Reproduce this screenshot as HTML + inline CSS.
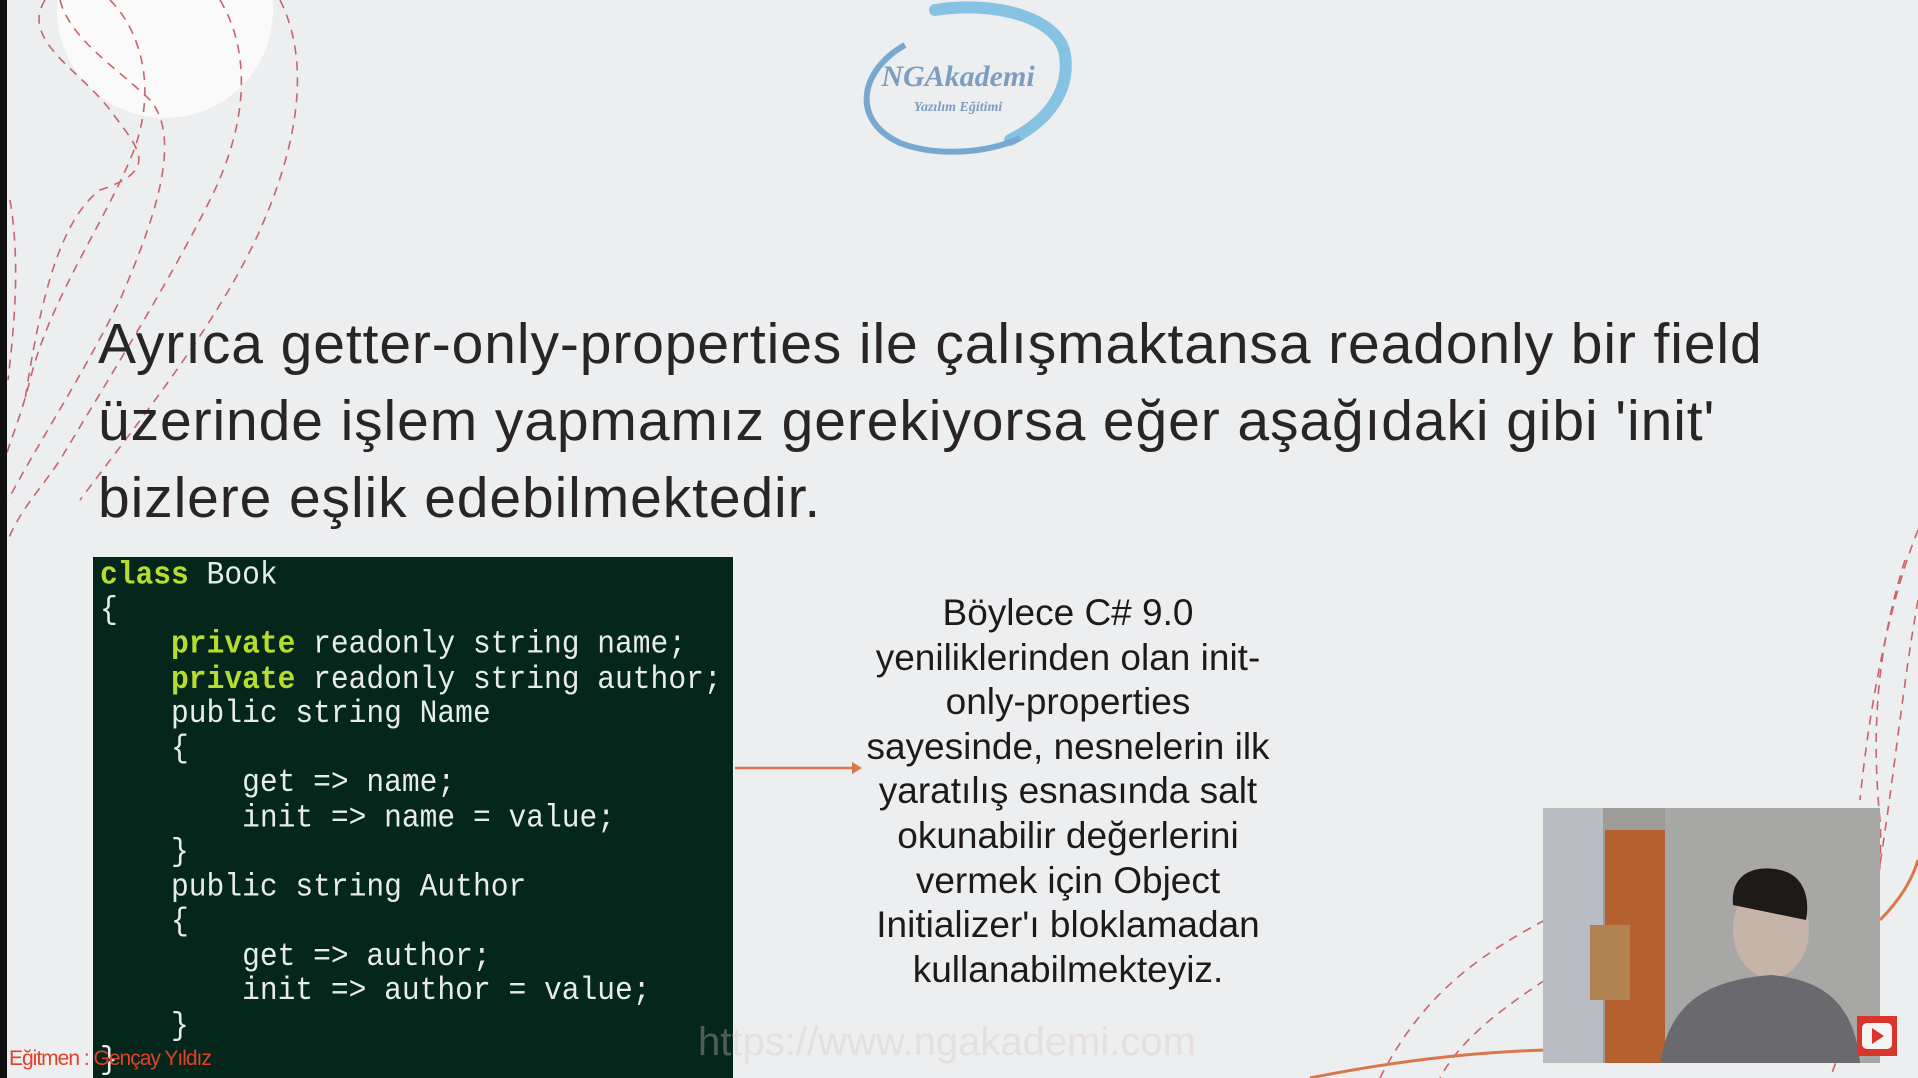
<!DOCTYPE html>
<html><head><meta charset="utf-8"><style>
html,body{margin:0;padding:0}
body{width:1918px;height:1078px;position:relative;overflow:hidden;background:#eceeef;font-family:"Liberation Sans",sans-serif}
.abs{position:absolute}
.title{left:98px;top:306px;font-size:57px;line-height:77px;color:#2a2525;letter-spacing:0.9px;white-space:nowrap}
.code{left:93px;top:557px;width:640px;height:521px;background:#04261b}
.code pre{margin:0;position:absolute;left:7px;top:1px;font-family:"Liberation Mono",monospace;font-size:29.6px;line-height:31.5px;letter-spacing:0px;color:#e8ece8;transform:scaleY(1.1);transform-origin:0 0}
.k{color:#b6dc2e;font-weight:bold}
.side{left:818px;top:591px;width:500px;text-align:center;font-size:37px;line-height:44.6px;color:#1e1a1a}
</style></head><body>
<svg class="abs" style="left:0;top:0" width="1918" height="1078">
<circle cx="165" cy="10" r="108" fill="#fafafa"/>
<g fill="none" stroke="#c9656a" stroke-width="1.6" stroke-dasharray="9 7">
<path d="M45 0 C20 40 80 70 110 110 C140 150 160 170 100 190 C60 220 40 300 25 400"/>
<path d="M60 0 C70 40 120 70 150 100 C185 140 150 230 120 300 C80 380 40 440 8 500"/>
<path d="M110 0 C140 30 160 90 130 160 C100 230 50 300 30 380 C20 420 10 440 5 460"/>
<path d="M220 0 C250 50 250 120 210 200 C170 280 120 360 60 460 C40 490 20 510 8 540"/>
<path d="M280 0 C310 60 300 140 260 230 C220 320 140 420 80 500"/>
<path d="M10 200 C20 260 15 320 8 380"/>
<path d="M1918 530 C1890 600 1870 700 1860 800"/>
<path d="M1905 560 C1880 640 1870 720 1880 820 C1885 900 1860 1000 1830 1078"/>
<path d="M1918 600 C1900 700 1890 820 1870 920"/>
<path d="M1545 920 C1470 960 1420 1000 1380 1078"/>
<path d="M1545 980 C1500 1010 1460 1040 1440 1078"/>
</g>
<path d="M1880 920 C1900 900 1912 880 1918 860" fill="none" stroke="#d9774a" stroke-width="3"/>
<path d="M1310 1078 C1400 1060 1480 1052 1545 1050" fill="none" stroke="#d9774a" stroke-width="3"/>
<rect x="0" y="0" width="7" height="1078" fill="#111"/>
<path d="M735 768 L858 768" stroke="#d9774a" stroke-width="2.5"/>
<path d="M852 762 L862 768 L852 774 Z" fill="#d9774a"/>
<path d="M935 10 C1000 0 1060 20 1065 55 C1070 90 1050 120 1010 140" fill="none" stroke="#86c3e3" stroke-width="12" stroke-linecap="round"/>
<path d="M905 45 C860 70 850 120 900 143 C940 158 990 152 1020 138" fill="none" stroke="#78a8cf" stroke-width="6"/>
<text x="958" y="86" text-anchor="middle" font-family="Liberation Serif,serif" font-style="italic" font-weight="bold" font-size="30" fill="#7d9ec0">NGAkademi</text>
<text x="958" y="111" text-anchor="middle" font-family="Liberation Serif,serif" font-style="italic" font-weight="bold" font-size="14" fill="#7d9ec0">Yazılım Eğitimi</text>
<rect x="1543" y="808" width="337" height="255" fill="#9d9c98"/>
<rect x="1543" y="808" width="60" height="255" fill="#b9bcc2"/>
<rect x="1605" y="830" width="60" height="233" fill="#b4612f"/>
<rect x="1590" y="925" width="40" height="75" fill="#b08252"/>
<rect x="1665" y="808" width="215" height="255" fill="#a7a8a6"/>
<ellipse cx="1771" cy="930" rx="38" ry="48" fill="#c6b4a8"/>
<path d="M1733 905 C1730 870 1760 865 1780 870 C1805 875 1810 900 1806 920" fill="#1e1a18"/>
<path d="M1660 1063 C1670 1000 1710 980 1771 975 C1830 980 1855 1010 1860 1063 Z" fill="#6a6a6e"/>
<rect x="1857" y="1016" width="40" height="40" fill="#d8362c"/>
<rect x="1862" y="1023" width="30" height="26" rx="5" fill="#f4f4f4"/>
<path d="M1872 1028 L1884 1036 L1872 1044 Z" fill="#d8362c"/>
</svg>
<div class="abs title">Ayrıca getter-only-properties ile çalışmaktansa readonly bir field<br>üzerinde işlem yapmamız gerekiyorsa eğer aşağıdaki gibi 'init'<br>bizlere eşlik edebilmektedir.</div>
<div class="abs code"><pre><span class="k">class</span> Book
{
    <span class="k">private</span> readonly string name;
    <span class="k">private</span> readonly string author;
    public string Name
    {
        get =&gt; name;
        init =&gt; name = value;
    }
    public string Author
    {
        get =&gt; author;
        init =&gt; author = value;
    }
}</pre></div>
<div class="abs side">Böylece C# 9.0<br>yeniliklerinden olan init-<br>only-properties<br>sayesinde, nesnelerin ilk<br>yaratılış esnasında salt<br>okunabilir değerlerini<br>vermek için Object<br>Initializer'ı bloklamadan<br>kullanabilmekteyiz.</div>
<div class="abs" style="left:698px;top:1020px;font-size:40px;color:#d9c6bd;opacity:0.35">https://www.ngakademi.com</div>
<div class="abs" style="left:9px;top:1047px;font-size:21px;color:#e0422a;letter-spacing:-1px">Eğitmen : Gençay Yıldız</div>
</body></html>
